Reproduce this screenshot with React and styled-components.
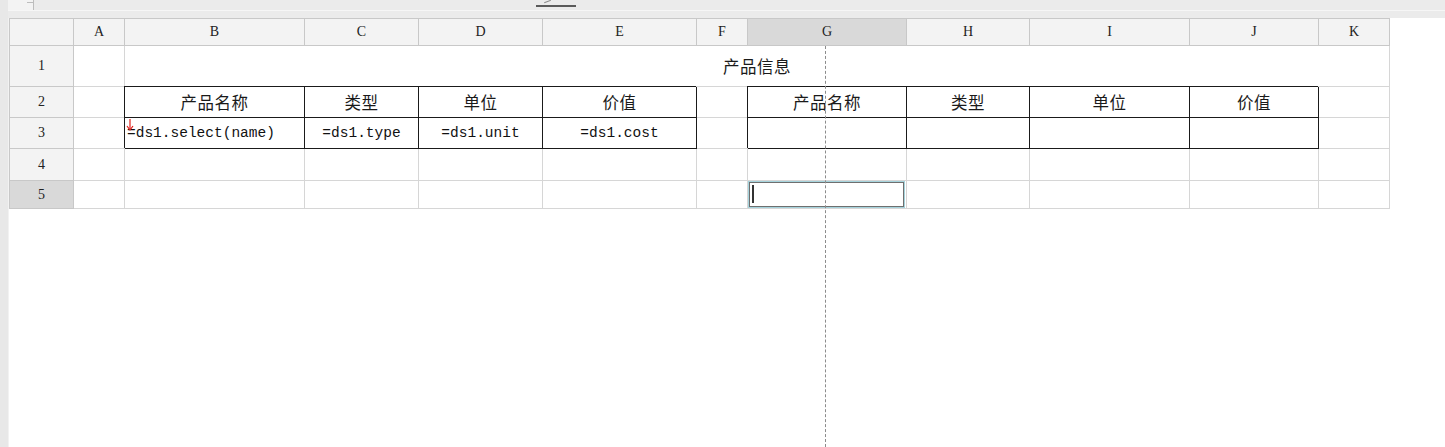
import React from 'react';
import styled, { createGlobalStyle, css } from 'styled-components';

const GlobalStyle = createGlobalStyle`
	html, body {
		margin: 0;
		padding: 0;
		background: #fff;
		overflow: hidden;
	}
	body {
		font-family: 'Noto Sans CJK SC', 'Noto Sans', sans-serif;
	}
`;

const COLS = ['A', 'B', 'C', 'D', 'E', 'F', 'G', 'H', 'I', 'J', 'K'];
const COL_WIDTHS = [64, 51, 180, 114, 124, 154, 51, 159, 123, 160, 129, 71];
const ROW_HEIGHTS = [27, 41, 31, 31, 32, 28];

const HEAD_ROW = ['产品名称', '类型', '单位', '价值'];
const FORMULAS = ['=ds1.select(name)', '=ds1.type', '=ds1.unit', '=ds1.cost'];

const Page = styled.div`
	display: flex;
	height: 447px;
	width: 1445px;
`;

const SideStrip = styled.div`
	width: 8px;
	flex-shrink: 0;
	background: #e8e8e8;
	border-right: 1px solid #f2f2f2;
`;

const Main = styled.div`
	flex: 1;
	display: flex;
	flex-direction: column;
	position: relative;
`;

const TabBar = styled.div`
	display: flex;
	height: 10px;
	background: #ebebeb;
	margin-left: -1px;
`;

const SheetTab = styled.div`
	width: 25px;
	height: 10px;
	background: #f3f3f3;
	border-right: 1px solid #bdbdbd;
	position: relative;
	&::after {
		content: '';
		position: absolute;
		right: 0;
		top: 2px;
		width: 6px;
		border-top: 1px solid #bdbdbd;
	}
`;

const ScrollThumb = styled.div`
	margin-left: 502px;
	margin-top: 5px;
	width: 40px;
	height: 2px;
	background: #5a5a5a;
	position: relative;
	&::before {
		content: '';
		position: absolute;
		left: 8px;
		top: -4px;
		width: 7px;
		height: 1px;
		background: #8a8a8a;
		transform: rotate(-20deg);
	}
`;

const Gutter = styled.div`
	height: 7px;
	background: #ebebeb;
	border-top: 1px solid #f6f6f6;
	margin-left: -1px;
`;

const Grid = styled.div`
	display: grid;
	grid-template-columns: ${COL_WIDTHS.map((w) => `${w}px`).join(' ')};
	grid-template-rows: ${ROW_HEIGHTS.map((h) => `${h}px`).join(' ')};
	width: max-content;
	border-top: 1px solid #c8c8c8;
	border-left: 1px solid #c8c8c8;
	font-family: 'Liberation Mono', 'DejaVu Sans Mono', monospace;
	color: #111;
`;

const Cell = styled.div`
	box-sizing: border-box;
	border-right: 1px solid #d6d6d6;
	border-bottom: 1px solid #d6d6d6;
	background: #fff;
	display: flex;
	align-items: center;
	justify-content: ${(p) => (p.$left ? 'flex-start' : 'center')};
	padding-left: ${(p) => (p.$left ? '2px' : '0')};
	font-size: 14.5px;
	white-space: nowrap;
	position: relative;
	grid-column: ${(p) => (p.$span ? `span ${p.$span}` : 'auto')};
	${(p) =>
		p.$boxed &&
		css`
			border-right-color: #1a1a1a;
			border-bottom-color: #1a1a1a;
			box-shadow: -1px -1px 0 #1a1a1a;
		`}
`;

const CjkText = styled.span`
	font-family: 'Noto Sans CJK SC', 'Noto Sans', sans-serif;
	font-size: 16.5px;
	letter-spacing: 0.5px;
	color: #1a1a1a;
`;

const Header = styled.div`
	box-sizing: border-box;
	border-right: 1px solid #c8c8c8;
	border-bottom: 1px solid #c8c8c8;
	background: ${(p) => (p.$active ? '#d9d9d9' : '#f3f3f3')};
	display: flex;
	align-items: center;
	justify-content: center;
	font-family: 'Liberation Serif', 'DejaVu Serif', serif;
	font-size: 14px;
	color: #222;
`;

const FlowMark = styled.svg`
	position: absolute;
	left: 1px;
	top: 1px;
`;

const Editor = styled.div`
	box-sizing: border-box;
	position: absolute;
	left: 0;
	top: 0;
	right: 1px;
	bottom: 0;
	border: 1px solid #a6d3dc;
	box-shadow: inset 0 0 0 1px #6f6f6f;
	&::after {
		content: '';
		position: absolute;
		left: 3px;
		top: 3px;
		width: 2px;
		height: 18px;
		background: #333;
	}
`;

const PageBreak = styled.div`
	position: absolute;
	left: 816px;
	top: 46px;
	bottom: 0;
	border-left: 1px dashed #8c8c8c;
	pointer-events: none;
`;

// rows 2-3 hold the two bordered blocks: B..E and G..J
const isBoxed = (col) => (col >= 1 && col <= 4) || (col >= 6 && col <= 9);

const renderRow = (rowIdx) => {
	const rowNo = rowIdx + 1;
	const cells = [
		<Header key='h' $active={rowNo === 5}>
			{rowNo}
		</Header>,
	];

	if (rowNo === 1) {
		cells.push(<Cell key='a' />);
		cells.push(
			<Cell key='title' $span={10}>
				<CjkText>产品信息</CjkText>
			</Cell>
		);
		return cells;
	}

	COLS.forEach((c, i) => {
		const key = `${c}${rowNo}`;
		if (rowNo === 2 && isBoxed(i)) {
			const label = HEAD_ROW[(i >= 6 ? i - 6 : i - 1)];
			cells.push(
				<Cell key={key} $boxed>
					<CjkText>{label}</CjkText>
				</Cell>
			);
		} else if (rowNo === 3 && isBoxed(i)) {
			const text = i <= 4 ? FORMULAS[i - 1] : '';
			cells.push(
				<Cell key={key} $boxed $left={i === 1}>
					{i === 1 && (
						<FlowMark width='8' height='12' viewBox='0 0 8 12'>
							<path d='M4 0 V10' stroke='#e0201c' strokeWidth='1.2' fill='none' />
							<path d='M1 7 L4 11 L7 7' stroke='#e0201c' strokeWidth='1.2' fill='none' />
						</FlowMark>
					)}
					{text}
				</Cell>
			);
		} else if (rowNo === 5 && c === 'G') {
			cells.push(
				<Cell key={key}>
					<Editor />
				</Cell>
			);
		} else {
			cells.push(<Cell key={key} />);
		}
	});
	return cells;
};

const App = () => (
	<>
		<GlobalStyle />
		<Page>
			<SideStrip />
			<Main>
				<TabBar>
					<SheetTab />
					<ScrollThumb />
				</TabBar>
				<Gutter />
				<Grid>
					<Header />
					{COLS.map((c) => (
						<Header key={c} $active={c === 'G'}>
							{c}
						</Header>
					))}
					{[0, 1, 2, 3, 4].map((r) => renderRow(r))}
				</Grid>
				<PageBreak />
			</Main>
		</Page>
	</>
);

export default App;
